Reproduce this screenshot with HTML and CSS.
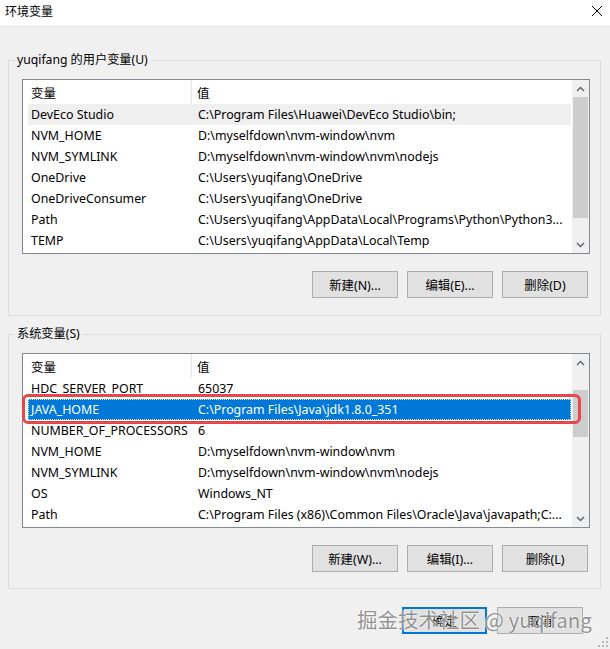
FILE: index.html
```html
<!DOCTYPE html>
<html lang="zh-CN">
<head>
<meta charset="utf-8">
<title>环境变量</title>
<link rel="stylesheet" href="styles.css">
</head>
<body>
<div class="window">
  <div class="titlebar">
    <span class="title">环境变量</span>
    <svg class="close" width="12" height="12" viewBox="0 0 12 12"><path d="M1 1L11 11M11 1L1 11" stroke="#000" stroke-width="1" fill="none"/></svg>
  </div>

  <div class="client">
    <fieldset class="group group-user">
      <legend>yuqifang 的用户变量(U)</legend>
      <div class="list">
        <div class="list-rows">
          <div class="row head"><span class="c1">变量</span><span class="c2">值</span></div>
          <div class="row hot"><span class="c1">DevEco Studio</span><span class="c2">C:\Program Files\Huawei\DevEco Studio\bin;</span></div>
          <div class="row"><span class="c1">NVM_HOME</span><span class="c2">D:\myselfdown\nvm-window\nvm</span></div>
          <div class="row"><span class="c1">NVM_SYMLINK</span><span class="c2">D:\myselfdown\nvm-window\nvm\nodejs</span></div>
          <div class="row"><span class="c1">OneDrive</span><span class="c2">C:\Users\yuqifang\OneDrive</span></div>
          <div class="row"><span class="c1">OneDriveConsumer</span><span class="c2">C:\Users\yuqifang\OneDrive</span></div>
          <div class="row"><span class="c1">Path</span><span class="c2">C:\Users\yuqifang\AppData\Local\Programs\Python\Python3...</span></div>
          <div class="row"><span class="c1">TEMP</span><span class="c2">C:\Users\yuqifang\AppData\Local\Temp</span></div>
        </div>
        <div class="scrollbar">
          <div class="arrow"><svg width="9" height="6" viewBox="0 0 9 6"><path d="M1 5L4.5 1.5L8 5" stroke="#606060" stroke-width="1.4" fill="none"/></svg></div>
          <div class="track"><div class="thumb thumb-user"></div></div>
          <div class="arrow"><svg width="9" height="6" viewBox="0 0 9 6"><path d="M1 1L4.5 4.5L8 1" stroke="#606060" stroke-width="1.4" fill="none"/></svg></div>
        </div>
      </div>
      <div class="buttons">
        <button class="btn">新建(N)...</button>
        <button class="btn">编辑(E)...</button>
        <button class="btn">删除(D)</button>
      </div>
    </fieldset>

    <fieldset class="group group-system">
      <legend>系统变量(S)</legend>
      <div class="list">
        <div class="list-rows">
          <div class="row head"><span class="c1">变量</span><span class="c2">值</span></div>
          <div class="row"><span class="c1">HDC_SERVER_PORT</span><span class="c2">65037</span></div>
          <div class="row selected"><span class="c1">JAVA_HOME</span><span class="c2">C:\Program Files\Java\jdk1.8.0_351</span></div>
          <div class="row"><span class="c1">NUMBER_OF_PROCESSORS</span><span class="c2">6</span></div>
          <div class="row"><span class="c1">NVM_HOME</span><span class="c2">D:\myselfdown\nvm-window\nvm</span></div>
          <div class="row"><span class="c1">NVM_SYMLINK</span><span class="c2">D:\myselfdown\nvm-window\nvm\nodejs</span></div>
          <div class="row"><span class="c1">OS</span><span class="c2">Windows_NT</span></div>
          <div class="row"><span class="c1">Path</span><span class="c2">C:\Program Files (x86)\Common Files\Oracle\Java\javapath;C:...</span></div>
        </div>
        <div class="scrollbar">
          <div class="arrow"><svg width="9" height="6" viewBox="0 0 9 6"><path d="M1 5L4.5 1.5L8 5" stroke="#606060" stroke-width="1.4" fill="none"/></svg></div>
          <div class="track"><div class="thumb thumb-system"></div></div>
          <div class="arrow"><svg width="9" height="6" viewBox="0 0 9 6"><path d="M1 1L4.5 4.5L8 1" stroke="#606060" stroke-width="1.4" fill="none"/></svg></div>
        </div>
      </div>
      <div class="buttons">
        <button class="btn">新建(W)...</button>
        <button class="btn">编辑(I)...</button>
        <button class="btn">删除(L)</button>
      </div>
    </fieldset>

    <div class="dialog-buttons">
      <button class="btn default">确定</button>
      <button class="btn">取消</button>
    </div>

    <div class="watermark">掘金技术社区 @ yuqifang</div>
    <svg class="grip" width="10" height="10" viewBox="0 0 10 10">
      <g fill="#b8b8b8">
        <rect x="8" y="0" width="2" height="2"/>
        <rect x="4" y="4" width="2" height="2"/><rect x="8" y="4" width="2" height="2"/>
        <rect x="0" y="8" width="2" height="2"/><rect x="4" y="8" width="2" height="2"/><rect x="8" y="8" width="2" height="2"/>
      </g>
    </svg>
  </div>
</div>
</body>
</html>
```

FILE: styles.css
```css
* {
  box-sizing: border-box;
}

html, body {
  margin: 0;
  padding: 0;
}

body {
  width: 610px;
  height: 649px;
  overflow: hidden;
  background: #f0f0f0;
  font-family: "Noto Sans", "Noto Sans CJK SC", sans-serif;
  font-size: 12px;
  color: #000;
}

.window {
  width: 610px;
  height: 649px;
  display: flex;
  flex-direction: column;
}

/* title bar */
.titlebar {
  height: 25px;
  background: #fff;
  display: flex;
  align-items: center;
  justify-content: space-between;
  padding: 0 7px 4px 5px;
}

.title {
  font-family: "Noto Sans CJK SC", sans-serif;
  font-size: 12px;
  line-height: 16px;
}

.close {
  display: block;
}

/* dialog client area */
.client {
  position: relative;
  flex: 1;
  display: flex;
  flex-direction: column;
  padding: 27px 9px 0 8px;
}

.group {
  margin: 0;
  border: 1px solid #dcdcdc;
  padding: 11px 10px 17px 13px;
  min-width: 0;
}

.group-system {
  margin-top: 10px;
  padding-bottom: 16px;
}

.group legend {
  margin-left: -7px;
  padding: 0 2px;
  line-height: 16px;
  font-family: "Noto Sans", "Noto Sans CJK SC", sans-serif;
  font-size: 12.2px;
}

/* list view */
.list {
  height: 175px;
  border: 1px solid #828790;
  background: #fff;
  display: flex;
}

.list-rows {
  flex: 1;
  min-width: 0;
  display: flex;
  flex-direction: column;
}

.row {
  position: relative;
  height: 21px;
  margin: 0 1px 0 5px;
  display: flex;
  align-items: center;
  white-space: nowrap;
  font-size: 12.4px;
}

.row .c1 {
  width: 164px;
  padding-left: 3px;
  flex: none;
  overflow: hidden;
}

.row .c2 {
  flex: 1;
  padding-left: 6px;
  overflow: hidden;
}

.row.head {
  height: 24px;
  margin-left: 0;
  margin-right: 0;
  font-family: "Noto Sans CJK SC", sans-serif;
  font-size: 12.5px;
}

.row.head .c1 {
  width: 169px;
  padding-left: 8px;
  border-right: 1px solid #e5e5e5;
  align-self: stretch;
  display: flex;
  align-items: center;
}

.row.head .c2 {
  padding-left: 5px;
}

.row.hot {
  background: #efefef;
}

.row.selected {
  background: #0078d7;
  color: #fff;
  outline: 1px dotted #d8e8ff;
  outline-offset: -1px;
}

/* annotation around the selected entry */
.row.selected::after {
  content: "";
  position: absolute;
  left: -6px;
  right: -10px;
  top: -5px;
  bottom: -4px;
  border: 3px solid #e8464a;
  border-radius: 6px;
}

/* scroll bar */
.scrollbar {
  width: 17px;
  flex: none;
  background: #f0f0f0;
  display: flex;
  flex-direction: column;
}

.arrow {
  height: 17px;
  display: flex;
  align-items: center;
  justify-content: center;
}

.arrow svg {
  display: block;
}

.track {
  flex: 1;
  display: flex;
  flex-direction: column;
  padding: 0 1px;
}

.thumb {
  background: #cdcdcd;
}

.thumb-user {
  height: 121px;
}

.thumb-system {
  margin-top: 19px;
  height: 47px;
}

/* push buttons */
.buttons {
  display: flex;
  justify-content: flex-end;
  gap: 9px;
  margin-top: 17px;
  padding-right: 2px;
}

.group-system .buttons {
  margin-top: 17px;
}

.btn {
  width: 86px;
  height: 27px;
  margin: 0;
  padding: 0;
  background: #e1e1e1;
  border: 1px solid #adadad;
  border-radius: 0;
  font-family: "Noto Sans", "Noto Sans CJK SC", sans-serif;
  font-size: 12.4px;
  color: #000;
}

.dialog-buttons {
  display: flex;
  justify-content: flex-end;
  gap: 10px;
  margin-top: 18px;
  padding-right: 18px;
}

.btn.default {
  width: 85px;
  border: 2px solid #0078d7;
}

/* site watermark stamped on the capture */
.watermark {
  position: absolute;
  left: 357px;
  top: 580px;
  font-family: "Noto Sans CJK SC", sans-serif;
  font-size: 20.5px;
  line-height: 28px;
  color: rgba(125, 125, 125, 0.85);
  text-shadow: 0 0 2px #fff, 0 0 1px #fff;
  white-space: nowrap;
  pointer-events: none;
}

.grip {
  position: absolute;
  right: 2px;
  bottom: 2px;
}
```
